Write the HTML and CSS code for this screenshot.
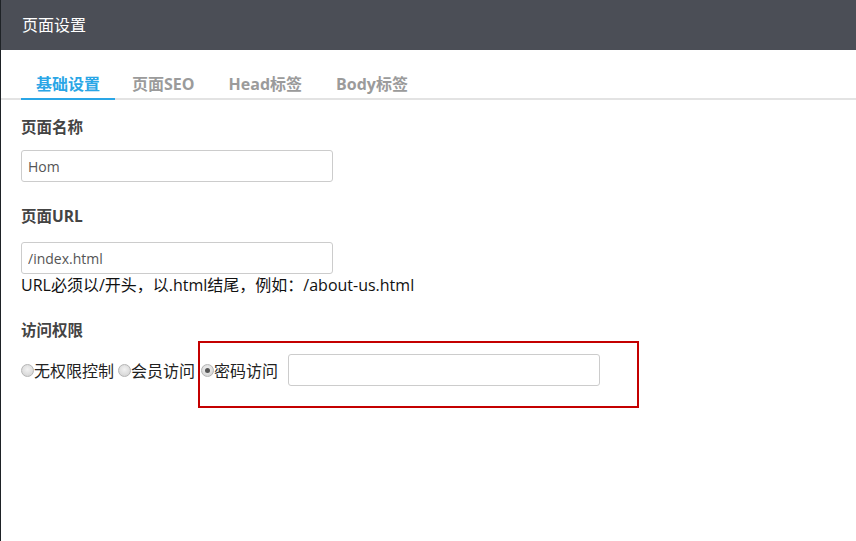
FILE: index.html
```html
<!DOCTYPE html>
<html lang="zh-CN">
<head>
<meta charset="utf-8">
<title>页面设置</title>
<link rel="stylesheet" href="styles.css">
</head>
<body>
<div class="panel">
  <div class="header">页面设置</div>
  <div class="tabs">
    <span class="tab active">基础设置</span>
    <span class="tab">页面SEO</span>
    <span class="tab">Head标签</span>
    <span class="tab">Body标签</span>
  </div>
  <div class="form">
    <div class="label l1">页面名称</div>
    <input class="field f1" type="text" value="Hom">
    <div class="label l2">页面URL</div>
    <input class="field f2" type="text" value="/index.html">
    <div class="help">URL必须以/开头，以.html结尾，例如：/about-us.html</div>
    <div class="label l3">访问权限</div>
    <div class="radios">
      <label class="opt outer"><span class="radio"></span>无权限控制</label>
      <label class="opt outer"><span class="radio"></span>会员访问</label>
      <div class="highlight">
        <label class="opt"><span class="radio checked"></span>密码访问</label>
        <input class="field pwd" type="text" value="">
      </div>
    </div>
  </div>
</div>
</body>
</html>
```

FILE: styles.css
```css
html, body {
  margin: 0;
  padding: 0;
  height: 100%;
  background: #fff;
}
body {
  font-family: "Open Sans", "Noto Sans CJK SC", sans-serif;
  color: #333;
}
.panel {
  height: 541px;
  border-left: 1px solid #1e2226;
  box-sizing: border-box;
}
.header {
  height: 50px;
  background: #4b4e56;
  color: #fff;
  font-size: 16px;
  line-height: 50px;
  padding-left: 21px;
}
.tabs {
  display: flex;
  margin-top: 20px;
  padding-left: 20px;
  border-bottom: 2px solid #e3e3e3;
  height: 28px;
}
.tab {
  padding: 0 17px;
  font-size: 16px;
  font-weight: bold;
  color: #9b9b9b;
  line-height: 28px;
  height: 28px;
}
.tab.active {
  color: #2aa6e6;
  border-bottom: 2px solid #2aa6e6;
  padding: 0 15px;
}
.form {
  padding-left: 20px;
}
.label {
  font-size: 15.5px;
  font-weight: bold;
  color: #444;
  line-height: 20px;
}
.l1 { margin-top: 17px; }
.l2 { margin-top: 24px; }
.l3 { margin-top: 25px; }
.field {
  display: block;
  box-sizing: border-box;
  width: 312px;
  height: 32px;
  border: 1px solid #cccccc;
  border-radius: 3px;
  padding: 0 6px;
  font-family: "Open Sans", "Noto Sans CJK SC", sans-serif;
  font-size: 14px;
  color: #555;
  outline: none;
}
.f1 { margin-top: 13px; }
.f2 { margin-top: 16px; }
.help {
  font-size: 16px;
  color: #111;
  line-height: 20px;
  margin-top: 1px;
}
.radios {
  display: flex;
  align-items: flex-start;
  margin-top: 1px;
  font-size: 16px;
  color: #222;
}
.opt {
  display: flex;
  align-items: center;
  height: 32px;
  margin-right: 4px;
}
.opt.outer {
  margin-top: 13px;
}
.radio {
  width: 11px;
  height: 11px;
  border-radius: 50%;
  border: 1px solid #b5b5b5;
  background: radial-gradient(circle at 50% 40%, #f2f2f2, #cfcfcf);
  position: relative;
}
.radio.checked::after {
  content: "";
  position: absolute;
  left: 3px;
  top: 3px;
  width: 5px;
  height: 5px;
  border-radius: 50%;
  background: #555;
}
.highlight {
  display: flex;
  align-items: flex-start;
  border: 2px solid #c40000;
  box-sizing: border-box;
  width: 441px;
  height: 67px;
  padding: 11px 0 0 1px;
  margin-left: -1px;
}
.highlight .opt {
  margin-right: 10px;
}
.pwd {
  margin-top: 0;
  width: 312px;
}
```
